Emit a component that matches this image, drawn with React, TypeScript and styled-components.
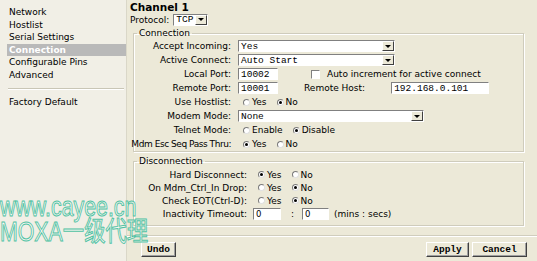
import React from "react";
import styled, { createGlobalStyle } from "styled-components";

const GlobalStyle = createGlobalStyle`
  html, body {
    margin: 0;
    padding: 0;
    background: #ece9d8;
  }
  body {
    font-family: "DejaVu Sans", Tahoma, sans-serif;
    font-size: 9px;
    color: #000;
  }
`;

const Page = styled.div`
  position: relative;
  width: 537px;
  height: 261px;
  display: grid;
  grid-template-columns: 127px 1fr;
  overflow: hidden;
`;

const Sidebar = styled.div`
  background: #f1efe6;
  border-right: 1px solid #dad7c8;
  padding-top: 6px;
`;

const NavItem = styled.div<{ $active?: boolean }>`
  height: 12.6px;
  line-height: 12.6px;
  margin-left: 7px;
  padding-left: 2px;
  white-space: nowrap;
  background: ${(p) => (p.$active ? "#b9b9b9" : "transparent")};
  color: ${(p) => (p.$active ? "#fff" : "#000")};
  font-weight: ${(p) => (p.$active ? "bold" : "normal")};
`;

const NavRule = styled.div`
  height: 0;
  margin: 6px 2px 6px 8px;
  border-top: 1px solid #c9c6b6;
  border-bottom: 1px solid #fff;
`;

const Main = styled.div`
  padding: 1px 0 0 3px;
  display: flex;
  flex-direction: column;
`;

const Title = styled.div`
  font-weight: bold;
  font-size: 10.5px;
  height: 12px;
  line-height: 12px;
`;

const ProtocolRow = styled.div`
  display: flex;
  align-items: center;
  gap: 4px;
  height: 13px;
`;

const Group = styled.fieldset<{ $top: number; $pb: number }>`
  margin: ${(p) => p.$top}px 0 0 3px;
  width: 391px;
  box-sizing: border-box;
  padding: 0 0 ${(p) => p.$pb}px 0;
  border: 1px solid #cfccbc;
  box-shadow: inset 1px 1px #fff, 1px 1px #fff;
  min-width: 0;
`;

const Legend = styled.legend`
  padding: 0 2px;
  margin-left: 3px;
  line-height: 10px;
`;

const Rows = styled.div<{ $label: number; $gap: number; $row: number; $pt: number }>`
  display: grid;
  grid-template-columns: ${(p) => p.$label}px 1fr;
  column-gap: ${(p) => p.$gap}px;
  grid-auto-rows: ${(p) => p.$row}px;
  align-items: center;
  padding-top: ${(p) => p.$pt}px;
`;

const Label = styled.div<{ $tight?: boolean }>`
  display: flex;
  justify-content: flex-end;
  white-space: nowrap;
  letter-spacing: ${(p) => (p.$tight ? "-0.45px" : "0")};
`;

const Cell = styled.div`
  display: flex;
  align-items: center;
  white-space: nowrap;
`;

const SelectBox = styled.div<{ $w: number }>`
  width: ${(p) => p.$w}px;
  height: 12px;
  box-sizing: border-box;
  background: #fff;
  border: 1px solid;
  border-color: #808080 #fff #fff #808080;
  display: flex;
  align-items: center;
  justify-content: space-between;
  font-family: "Liberation Mono", "Courier New", monospace;
  font-size: 9.5px;
  padding-left: 2px;
`;

const ArrowBtn = styled.span`
  width: 12px;
  height: 10px;
  box-sizing: border-box;
  background: #ece9d8;
  border: 1px solid;
  border-color: #fff #404040 #404040 #fff;
  display: flex;
  align-items: center;
  justify-content: center;

  &::after {
    content: "";
    border-left: 3px solid transparent;
    border-right: 3px solid transparent;
    border-top: 3px solid #000;
  }
`;

const TextBox = styled.input<{ $w: number; $mono?: boolean }>`
  width: ${(p) => p.$w}px;
  height: 12px;
  box-sizing: border-box;
  margin: 0;
  padding: 0 0 0 2px;
  background: #fff;
  border: 1px solid;
  border-color: #808080 #fff #fff #808080;
  outline: none;
  font-family: ${(p) =>
    p.$mono ? `"Liberation Mono", "Courier New", monospace` : `"DejaVu Sans", sans-serif`};
  font-size: ${(p) => (p.$mono ? "9.5px" : "8.5px")};
  color: #000;
`;

const Radio = styled.span<{ $on?: boolean }>`
  width: 7px;
  height: 7px;
  box-sizing: border-box;
  border-radius: 50%;
  border: 1px solid;
  border-color: #7a7a7a #e0e0e0 #e0e0e0 #7a7a7a;
  background: #fff;
  margin: 0 2px 0 5px;
  display: flex;
  align-items: center;
  justify-content: center;

  &::after {
    content: "";
    width: 3px;
    height: 3px;
    border-radius: 50%;
    background: ${(p) => (p.$on ? "#000" : "transparent")};
  }
`;

const OptText = styled.span`
  margin-right: 5px;
`;

const Check = styled.span`
  width: 9px;
  height: 9px;
  box-sizing: border-box;
  background: #fff;
  border: 1px solid;
  border-color: #808080 #fff #fff #808080;
  margin: 0 7px 0 33px;
`;

const Spacer = styled.span<{ $w: number }>`
  display: inline-block;
  width: ${(p) => p.$w}px;
  flex: none;
`;

const BottomRule = styled.div`
  margin: 9px 0 0 -3px;
  border-top: 1px solid #d0cdbd;
  border-bottom: 1px solid #fff;
`;

const ButtonBar = styled.div`
  display: flex;
  align-items: center;
  margin: 5px 10px 0 11px;
  gap: 3px;
`;

const Button = styled.div<{ $w: number }>`
  width: ${(p) => p.$w}px;
  height: 15px;
  box-sizing: border-box;
  display: flex;
  align-items: center;
  justify-content: center;
  background: #ece9d8;
  border: 1px solid;
  border-color: #fff #404040 #404040 #fff;
  box-shadow: inset -1px -1px #a0a0a0;
  font-family: "Liberation Mono", "Courier New", monospace;
  font-weight: bold;
  font-size: 9.5px;
`;

const Push = styled.div`
  flex: 1;
`;

const Watermark = styled.div`
  position: absolute;
  left: 0;
  top: 195px;
  transform: scaleX(0.79);
  transform-origin: left top;
  font-family: "Liberation Sans", "Noto Sans CJK SC", sans-serif;
  font-size: 27px;
  line-height: 25px;
  color: rgba(255, 255, 255, 0.5);
  -webkit-text-stroke: 1px #4fc2a3;
  white-space: nowrap;
  pointer-events: none;
`;

type Opt = { text: string; on?: boolean };

const Radios = ({ opts }: { opts: Opt[] }) => (
  <Cell>
    {opts.map((o) => (
      <React.Fragment key={o.text}>
        <Radio $on={o.on} />
        <OptText>{o.text}</OptText>
      </React.Fragment>
    ))}
  </Cell>
);

const Select = ({ value, w }: { value: string; w: number }) => (
  <SelectBox $w={w}>
    <span>{value}</span>
    <ArrowBtn />
  </SelectBox>
);

const nav = ["Network", "Hostlist", "Serial Settings", "Connection", "Configurable Pins", "Advanced"];

export default function App() {
  return (
    <>
      <GlobalStyle />
      <Page>
        <Sidebar>
          {nav.map((n) => (
            <NavItem key={n} $active={n === "Connection"}>
              {n}
            </NavItem>
          ))}
          <NavRule />
          <NavItem>Factory Default</NavItem>
        </Sidebar>

        <Main>
          <Title>Channel 1</Title>
          <ProtocolRow>
            <span>Protocol:</span>
            <Select value="TCP" w={35} />
          </ProtocolRow>

          <Group $top={2} $pb={0}>
            <Legend>Connection</Legend>
            <Rows $label={97} $gap={7} $row={14} $pt={1}>
              <Label>Accept Incoming:</Label>
              <Cell>
                <Select value="Yes" w={157} />
              </Cell>
              <Label>Active Connect:</Label>
              <Cell>
                <Select value="Auto Start" w={157} />
              </Cell>
              <Label>Local Port:</Label>
              <Cell>
                <TextBox $w={40} $mono readOnly value="10002" />
                <Check />
                <span>Auto increment for active connect</span>
              </Cell>
              <Label>Remote Port:</Label>
              <Cell>
                <TextBox $w={40} $mono readOnly value="10001" />
                <Spacer $w={26} />
                <span>Remote Host:</span>
                <Spacer $w={26} />
                <TextBox $w={98} $mono readOnly value="192.168.0.101" />
              </Cell>
              <Label>Use Hostlist:</Label>
              <Radios opts={[{ text: "Yes" }, { text: "No", on: true }]} />
              <Label>Modem Mode:</Label>
              <Cell>
                <Select value="None" w={186} />
              </Cell>
              <Label>Telnet Mode:</Label>
              <Radios opts={[{ text: "Enable" }, { text: "Disable", on: true }]} />
              <Label $tight>Mdm Esc Seq Pass Thru:</Label>
              <Radios opts={[{ text: "Yes", on: true }, { text: "No" }]} />
            </Rows>
          </Group>

          <Group $top={4} $pb={5}>
            <Legend>Disconnection</Legend>
            <Rows $label={113} $gap={6} $row={13} $pt={2}>
              <Label>Hard Disconnect:</Label>
              <Radios opts={[{ text: "Yes", on: true }, { text: "No" }]} />
              <Label>On Mdm_Ctrl_In Drop:</Label>
              <Radios opts={[{ text: "Yes" }, { text: "No", on: true }]} />
              <Label>Check EOT(Ctrl-D):</Label>
              <Radios opts={[{ text: "Yes" }, { text: "No", on: true }]} />
              <Label>Inactivity Timeout:</Label>
              <Cell>
                <TextBox $w={28} readOnly value="0" />
                <Spacer $w={10} />
                <span>:</span>
                <Spacer $w={8} />
                <TextBox $w={27} readOnly value="0" />
                <Spacer $w={5} />
                <span>(mins : secs)</span>
              </Cell>
            </Rows>
          </Group>

          <BottomRule />
          <ButtonBar>
            <Button $w={35}>Undo</Button>
            <Push />
            <Button $w={43}>Apply</Button>
            <Button $w={55}>Cancel</Button>
          </ButtonBar>
        </Main>

        <Watermark>
          www.cayee.cn
          <br />
          MOXA一级代理
        </Watermark>
      </Page>
    </>
  );
}
